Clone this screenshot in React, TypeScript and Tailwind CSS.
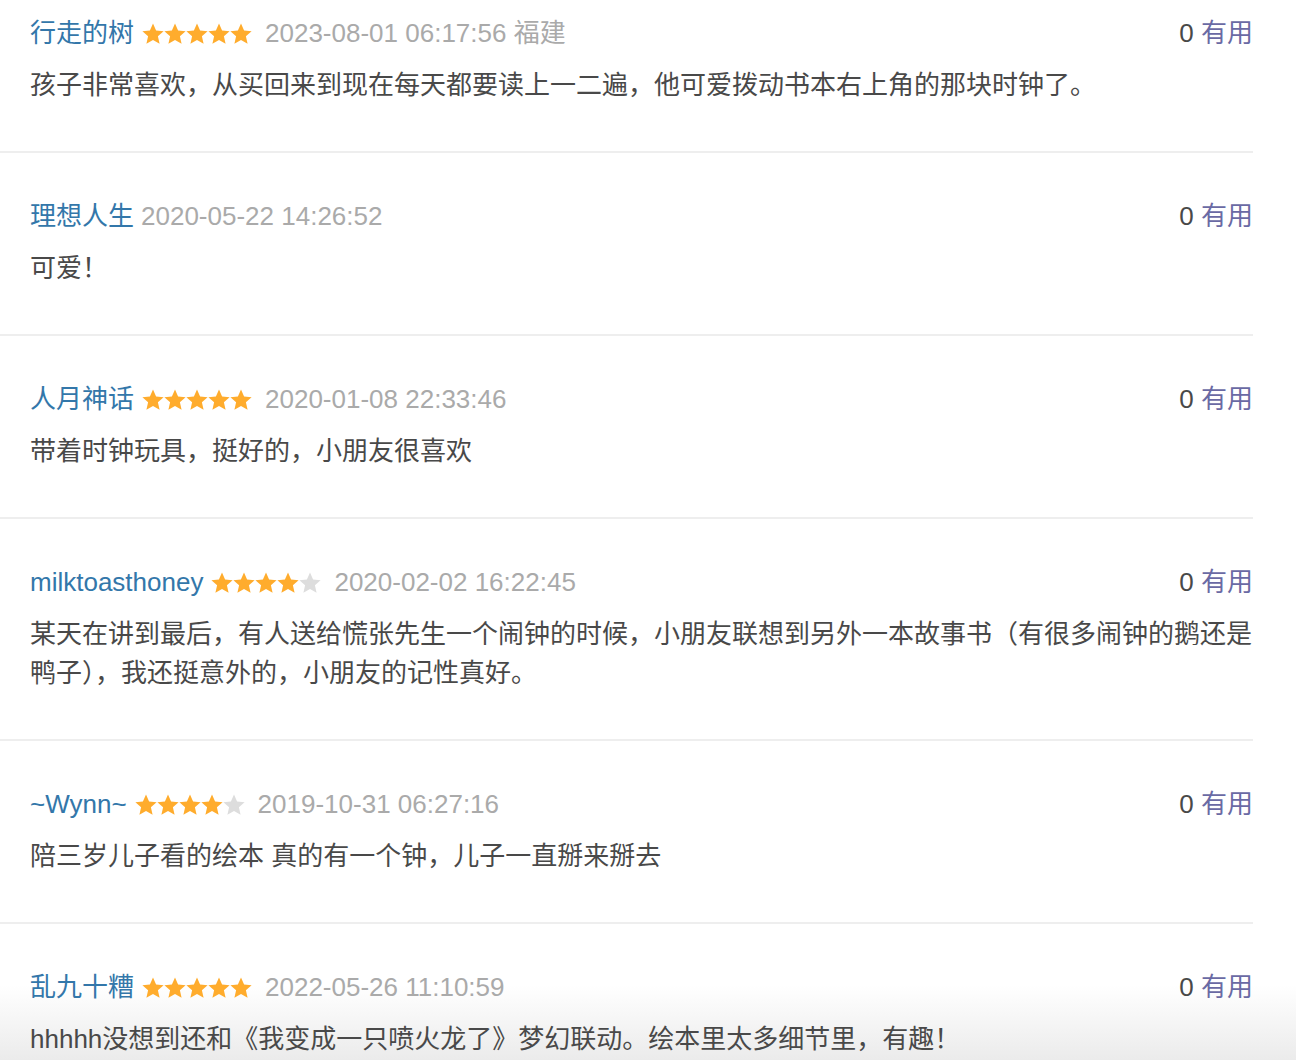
import React from "react"

type Review = {
  name: string
  stars?: number
  date: string
  content: string
}

const reviews: Review[] = [
  {
    name: "行走的树",
    stars: 5,
    date: "2023-08-01 06:17:56 福建",
    content: "孩子非常喜欢，从买回来到现在每天都要读上一二遍，他可爱拨动书本右上角的那块时钟了。",
  },
  { name: "理想人生", date: "2020-05-22 14:26:52", content: "可爱！" },
  { name: "人月神话", stars: 5, date: "2020-01-08 22:33:46", content: "带着时钟玩具，挺好的，小朋友很喜欢" },
  {
    name: "milktoasthoney",
    stars: 4,
    date: "2020-02-02 16:22:45",
    content:
      "某天在讲到最后，有人送给慌张先生一个闹钟的时候，小朋友联想到另外一本故事书（有很多闹钟的鹅还是鸭子），我还挺意外的，小朋友的记性真好。",
  },
  { name: "~Wynn~", stars: 4, date: "2019-10-31 06:27:16", content: "陪三岁儿子看的绘本 真的有一个钟，儿子一直掰来掰去" },
  {
    name: "乱九十糟",
    stars: 5,
    date: "2022-05-26 11:10:59",
    content: "hhhhh没想到还和《我变成一只喷火龙了》梦幻联动。绘本里太多细节里，有趣！",
  },
]

function Star({ on }: { on: boolean }) {
  return (
    <svg width="22" height="22" viewBox="0 0 22 22" className="shrink-0">
      <polygon
        points="11,0.6 14.1,7.6 21.6,8.3 15.9,13.3 17.6,20.8 11,16.9 4.4,20.8 6.1,13.3 0.4,8.3 7.9,7.6"
        fill={on ? "#ffac2d" : "#dddddd"}
      />
    </svg>
  )
}

function Stars({ count }: { count: number }) {
  return (
    <span className="flex items-center">
      {[0, 1, 2, 3, 4].map((i) => (
        <Star key={i} on={i < count} />
      ))}
    </span>
  )
}

export default function App() {
  return (
    <div
      className="h-[1060px] overflow-hidden bg-[linear-gradient(to_bottom,#ffffff_985px,#ebebeb_1060px)]"
      style={{ fontFamily: '"Liberation Sans", "Noto Sans CJK SC", sans-serif' }}
    >
      <div className="-mt-[30px] w-[1253px]">
        {reviews.map((r, idx) => (
          <div key={idx} className="border-b-2 border-[#eeeeee] pl-[30px] pt-[44px] pb-[46px] text-[26px]">
            <div className="flex items-center justify-between leading-[39px]">
              <div className="flex items-center">
                <span className="text-[#3377aa]">{r.name}</span>
                {r.stars ? (
                  <span className="ml-[8px]">
                    <Stars count={r.stars} />
                  </span>
                ) : null}
                <span className={r.stars ? "ml-[13px] text-[#aaaaaa]" : "ml-[7px] text-[#aaaaaa]"}>{r.date}</span>
              </div>
              <div className="whitespace-nowrap">
                <span className="text-[#494949]">0 </span>
                <span className="text-[#6a6aa4]">有用</span>
              </div>
            </div>
            <p className="mt-[13px] leading-[39px] text-[#494949]">{r.content}</p>
          </div>
        ))}
      </div>
    </div>
  )
}
